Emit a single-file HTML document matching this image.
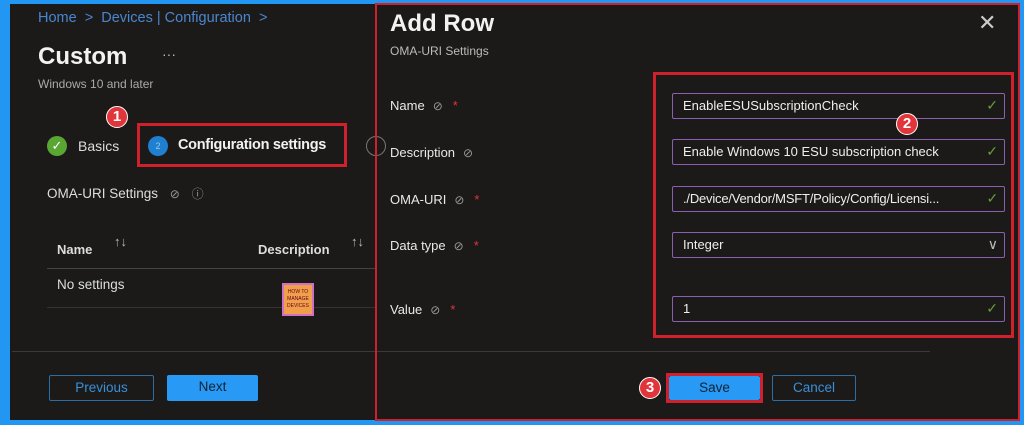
<!DOCTYPE html>
<html><head><meta charset="utf-8"><style>
*{box-sizing:border-box;margin:0;padding:0}
body{width:1024px;height:425px;background:#2196f3;position:relative;overflow:hidden;font-family:"Liberation Sans",sans-serif;color:#e8e8e8}
.a{position:absolute}
.bg{left:10px;top:4px;width:1009px;height:416px;background:#1b1a19}
.t{position:absolute;white-space:nowrap}
.badge{position:absolute;width:22px;height:22px;border-radius:50%;background:#e0353b;color:#fff;font-weight:bold;font-size:15px;text-align:center;line-height:20px;border:1px solid #fff}
.inp{position:absolute;left:672px;width:333px;height:26px;border:1.5px solid #8a5fb0;border-radius:2px;font-size:13px;line-height:23px;padding-left:10px;color:#eee}
.chk{position:absolute;right:6px;top:0;color:#6a9a3a;font-size:14px}
.lbl{position:absolute;left:390px;font-size:13px;color:#e8e8e8}
.star{color:#e0353b;margin-left:10px}
.ic{color:#999;font-size:12px;margin-left:8px}
.btn{position:absolute;height:26px;font-size:13.5px;text-align:center;line-height:24px;border-radius:2px}
</style></head><body>
<div class="a bg"></div>
<div class="t" style="left:38px;top:10px;font-size:14.5px;color:#4a86d0">Home &nbsp;&gt;&nbsp; Devices | Configuration &nbsp;&gt;</div>
<div class="t" style="left:38px;top:43px;font-size:24px;font-weight:bold;color:#f2f2f2">Custom</div>
<div class="t" style="left:162px;top:46px;font-size:14px;color:#bbb">···</div>
<div class="t" style="left:38px;top:77px;font-size:12px;color:#aaa">Windows 10 and later</div>
<div class="badge" style="left:106px;top:106px">1</div>
<div class="a" style="left:137px;top:123px;width:210px;height:44px;border:3px solid #d0202b"></div>
<div class="a" style="left:47px;top:136px;width:20px;height:20px;border-radius:50%;background:#5aa632;color:#fff;font-size:13px;text-align:center;line-height:20px">✓</div>
<div class="t" style="left:78px;top:138px;font-size:14px;color:#ddd">Basics</div>
<div class="a" style="left:148px;top:136px;width:20px;height:20px;border-radius:50%;background:#1f7fd0;color:#9cd;font-size:9px;text-align:center;line-height:20px">2</div>
<div class="t" style="left:178px;top:137px;font-size:14.5px;font-weight:bold;color:#f2f2f2;letter-spacing:-0.3px">Configuration settings</div>
<div class="a" style="left:366px;top:136px;width:20px;height:20px;border-radius:50%;border:1px solid #777"></div>
<div class="t" style="left:47px;top:185px;font-size:13.5px;color:#ddd">OMA-URI Settings <span class="ic">⊘</span> <span class="ic">ⓘ</span></div>
<div class="t" style="left:57px;top:242px;font-size:13px;font-weight:bold;color:#ddd">Name</div>
<div class="t" style="left:114px;top:234px;font-size:13px;color:#bbb">↑↓</div>
<div class="t" style="left:258px;top:242px;font-size:13px;font-weight:bold;color:#ddd">Description</div>
<div class="t" style="left:351px;top:234px;font-size:13px;color:#bbb">↑↓</div>
<div class="a" style="left:47px;top:268px;width:330px;height:1px;background:#444"></div>
<div class="t" style="left:57px;top:277px;font-size:13.5px;color:#ddd">No settings</div>
<div class="a" style="left:47px;top:307px;width:330px;height:1px;background:#333"></div>
<div class="a" style="left:282px;top:283px;width:32px;height:33px;background:#f0a04a;border:2px solid #d070c0;font-size:5px;color:#602;text-align:center;line-height:7px;padding-top:4px">HOW TO<br>MANAGE<br>DEVICES</div>
<div class="a" style="left:12px;top:351px;width:918px;height:1px;background:#3a3a3a"></div>
<div class="btn" style="left:49px;top:375px;width:105px;border:1px solid #2b6ea6;color:#3a8fd8">Previous</div>
<div class="btn" style="left:167px;top:375px;width:91px;background:#2899f5;color:#123">Next</div>
<div class="a" style="left:375px;top:3px;width:645px;height:418px;border:2px solid #d0202b"></div>
<div class="t" style="left:390px;top:10px;font-size:24px;font-weight:bold;color:#f2f2f2">Add Row</div>
<div class="t" style="left:390px;top:44px;font-size:12px;color:#bbb">OMA-URI Settings</div>
<div class="t" style="left:978px;top:10px;font-size:22px;color:#ccc">✕</div>
<div class="lbl" style="top:98px">Name<span class="ic">⊘</span><span class="star">*</span></div>
<div class="lbl" style="top:145px">Description<span class="ic">⊘</span></div>
<div class="lbl" style="top:192px">OMA-URI<span class="ic">⊘</span><span class="star">*</span></div>
<div class="lbl" style="top:238px">Data type<span class="ic">⊘</span><span class="star">*</span></div>
<div class="lbl" style="top:302px">Value<span class="ic">⊘</span><span class="star">*</span></div>
<div class="a" style="left:653px;top:72px;width:361px;height:266px;border:3px solid #d0202b"></div>
<div class="inp" style="top:93px">EnableESUSubscriptionCheck<span class="chk">✓</span></div>
<div class="inp" style="top:139px">Enable Windows 10 ESU subscription check<span class="chk">✓</span></div>
<div class="inp" style="top:186px;letter-spacing:-0.2px">./Device/Vendor/MSFT/Policy/Config/Licensi...<span class="chk">✓</span></div>
<div class="inp" style="top:232px">Integer<span class="chk" style="color:#bbb">∨</span></div>
<div class="inp" style="top:296px">1<span class="chk">✓</span></div>
<div class="badge" style="left:896px;top:113px">2</div>
<div class="a" style="left:666px;top:373px;width:97px;height:30px;border:3px solid #d0202b"></div>
<div class="btn" style="left:669px;top:376px;width:91px;height:24px;background:#2899f5;color:#123;line-height:24px">Save</div>
<div class="btn" style="left:772px;top:375px;width:84px;border:1px solid #2b6ea6;color:#3a8fd8">Cancel</div>
<div class="badge" style="left:639px;top:377px">3</div>
</body></html>
